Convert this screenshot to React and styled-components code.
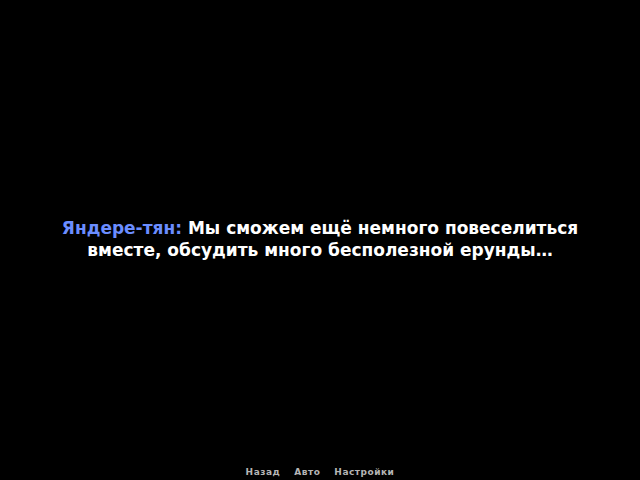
import React from "react";
import styled, { createGlobalStyle } from "styled-components";

const Global = createGlobalStyle`
  html, body { margin: 0; padding: 0; background: #000; }
  #root { height: 480px; }
`;

const Screen = styled.div`
  width: 640px;
  height: 480px;
  background: #000;
  display: flex;
  flex-direction: column;
  font-family: "DejaVu Sans", "Noto Sans", sans-serif;
`;

const Stage = styled.div`
  flex: 1;
  display: flex;
  align-items: center;
  justify-content: center;
  padding-top: 14px;
`;

const Line = styled.p`
  margin: 0;
  width: 560px;
  text-align: center;
  color: #fff;
  font-weight: bold;
  font-size: 17px;
  line-height: 22px;
`;

const Speaker = styled.span`
  color: #6b8dff;
`;

const Menu = styled.div`
  display: flex;
  justify-content: center;
  gap: 14px;
  height: 13px;
  padding-top: 3px;
`;

const MenuItem = styled.span`
  color: #b5b5b5;
  font-size: 9px;
  line-height: 11px;
  font-weight: bold;
  letter-spacing: 0.5px;
`;

export default function App() {
  return (
    <>
      <Global />
      <Screen>
        <Stage>
          <Line>
            <Speaker>Яндере-тян:</Speaker> Мы сможем ещё немного повеселиться
            вместе, обсудить много бесполезной ерунды…
          </Line>
        </Stage>
        <Menu>
          <MenuItem>Назад</MenuItem>
          <MenuItem>Авто</MenuItem>
          <MenuItem>Настройки</MenuItem>
        </Menu>
      </Screen>
    </>
  );
}
